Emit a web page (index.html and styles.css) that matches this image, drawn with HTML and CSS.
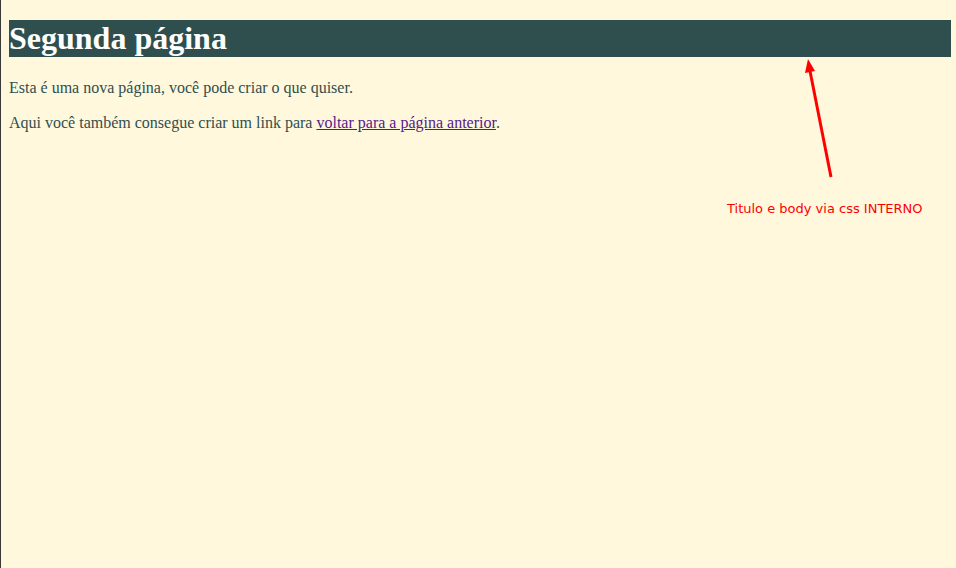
FILE: index.html
```html
<!DOCTYPE html>
<html lang="pt-BR">
<head>
<meta charset="utf-8">
<title>Segunda página</title>
<link rel="stylesheet" href="styles.css">
</head>
<body>
<div class="frame">
  <main class="page">
    <h1 class="title">Segunda página</h1>
    <p class="text">Esta é uma nova página, você pode criar o que quiser.</p>
    <p class="text">Aqui você também consegue criar um link para <a class="link" href="#">voltar para a página anterior</a>.</p>
  </main>
  <div class="note">
    <svg class="arrow" width="40" height="130" viewBox="0 0 40 130">
      <line x1="27" y1="120" x2="6" y2="14" stroke="#ff0000" stroke-width="3"/>
      <polygon points="4,2 1,16 11,14" fill="#ff0000"/>
    </svg>
    <span class="note-text">Titulo e body via css INTERNO</span>
  </div>
</div>
</body>
</html>
```

FILE: styles.css
```css
html, body {
  margin: 0;
  padding: 0;
  height: 100%;
  background: #fff8dc;
}

.frame {
  position: relative;
  box-sizing: border-box;
  min-height: 100%;
  border-left: 1px solid #3a3a3a;
  padding: 20px 5px 1px 8px;
}

.page {
  font-family: "Liberation Serif", "Times New Roman", serif;
  color: #2f4f4f;
}

.title {
  margin: 0 0 21px 0;
  background: #2f4f4f;
  color: #ffffff;
  font-size: 32px;
  font-weight: bold;
  line-height: 37px;
}

.text {
  margin: 0 0 16px 0;
  font-size: 16px;
  line-height: 19px;
}

.link {
  color: #551a8b;
}

.note {
  position: absolute;
  left: 726px;
  top: 57px;
  width: 220px;
}

.arrow {
  position: absolute;
  left: 77px;
  top: 0;
  display: block;
}

.note-text {
  position: absolute;
  left: 0;
  top: 144px;
  white-space: nowrap;
  font-family: "DejaVu Sans", Tahoma, sans-serif;
  font-size: 13px;
  color: #ff0000;
}
```
